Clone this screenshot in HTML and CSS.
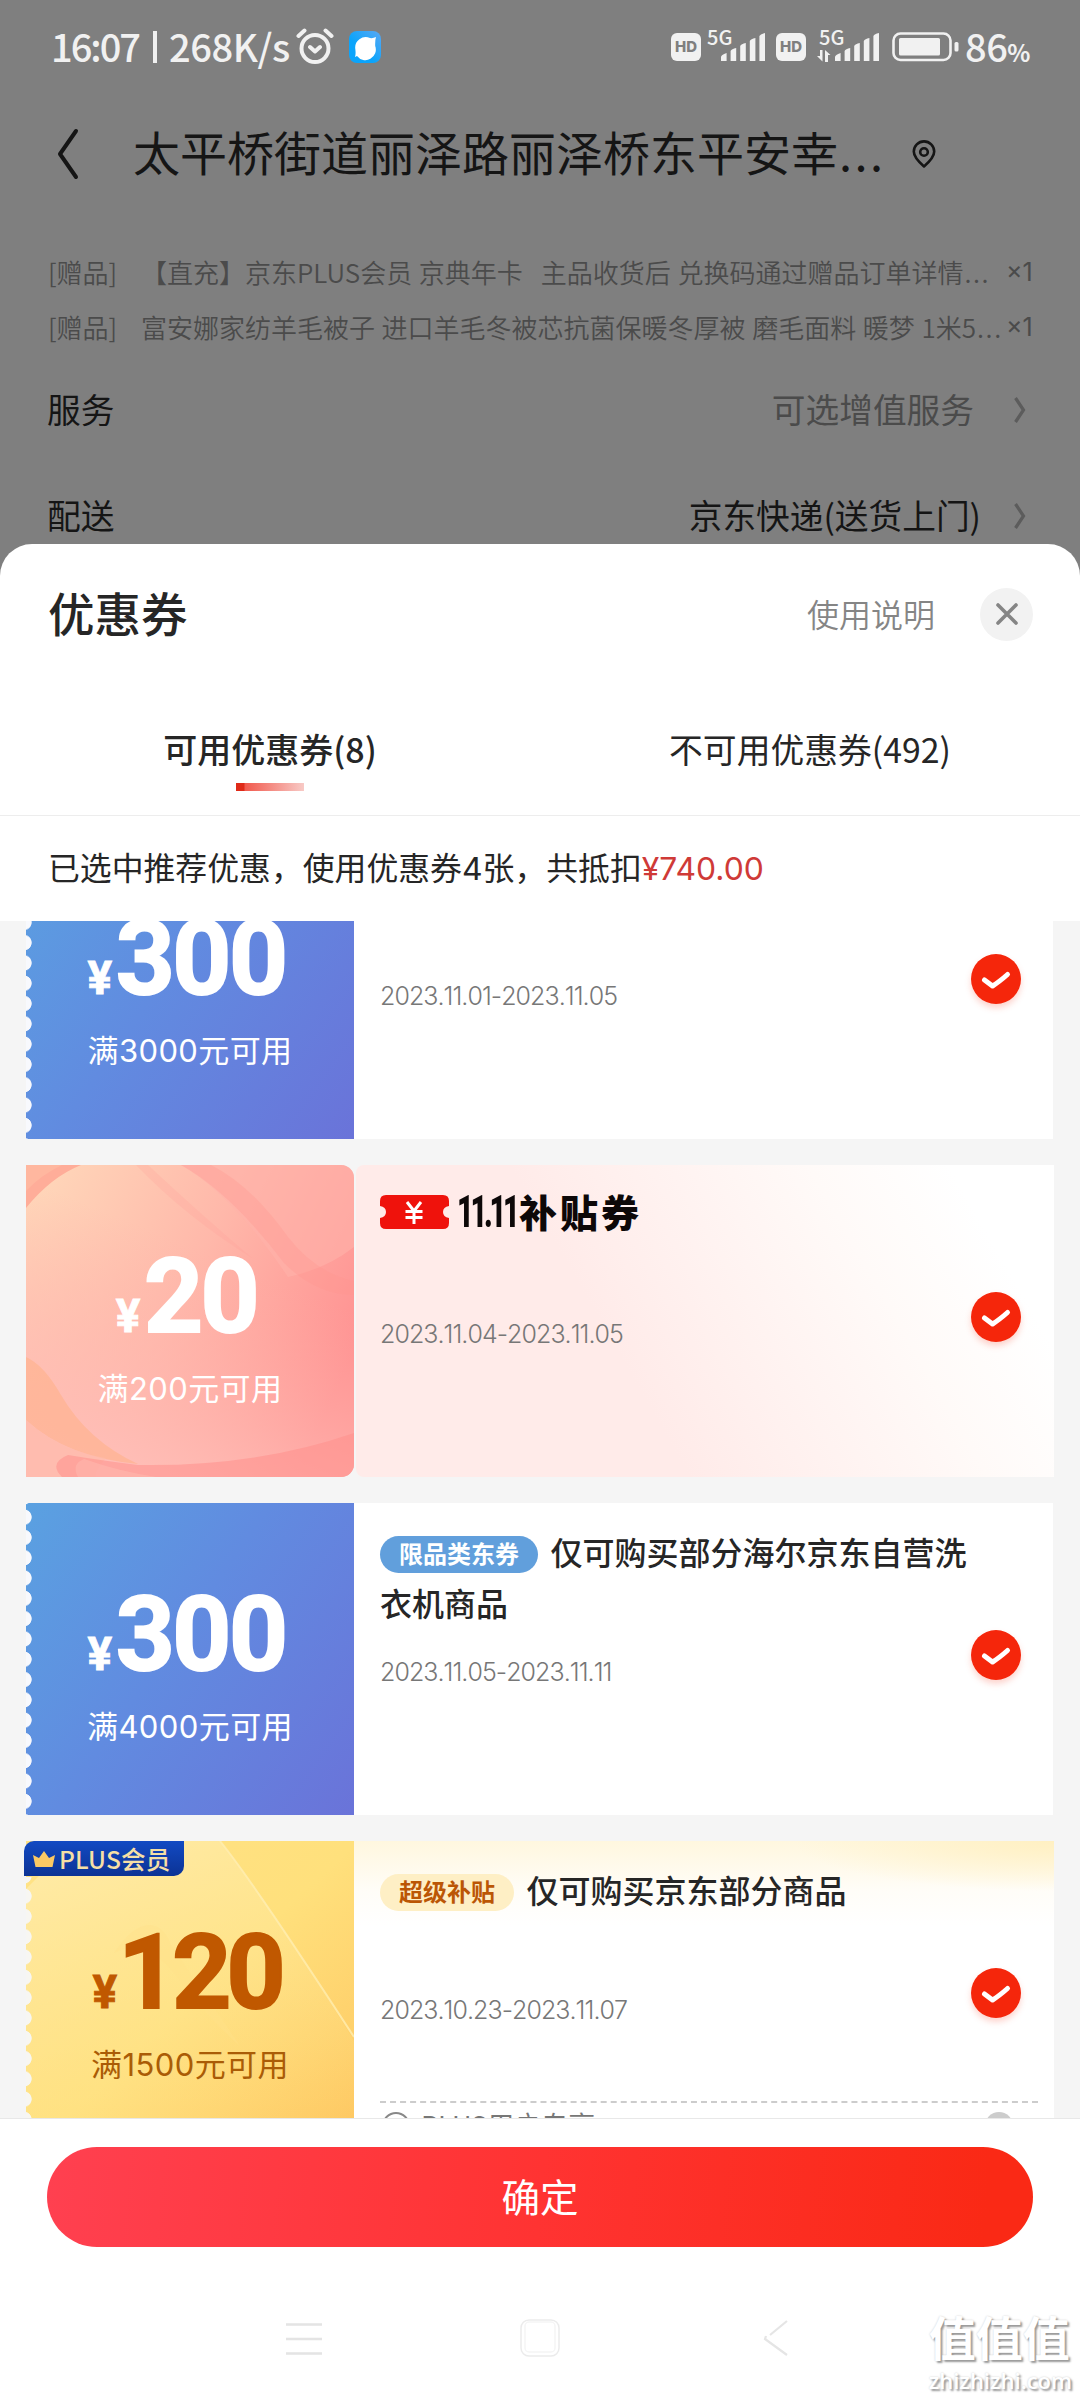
FILE: index.html
```html
<!DOCTYPE html>
<html lang="zh-CN">
<head>
<meta charset="utf-8">
<title>优惠券</title>
<link rel="stylesheet" href="styles.css">
</head>
<body>
<svg class="defs" width="0" height="0" aria-hidden="true">
  <symbol id="check" viewBox="0 0 70 70">
    <circle cx="35" cy="33" r="25" fill="#f5260b"/>
    <path d="M23.500 34 L31.500 40 Q38 36 46.500 28.500" fill="none" stroke="#fff" stroke-width="5" stroke-linecap="round" stroke-linejoin="round"/>
  </symbol>
  <symbol id="bars" viewBox="0 0 46 30">
    <path d="M0 29v-4q0-2 5.6-4v8zM9.6 29V19q1-2 5.6-3v13zM19.2 29V14q1-2 5.6-3v18zM28.8 29V9q1-2 5.6-3v23zM38.4 29V4q1-2 5.6-3v28z" fill="#f1f1f1"/>
  </symbol>
  <symbol id="chev" viewBox="0 0 14 28">
    <path d="M2.500 2 L10.500 14 L2.500 26" fill="none" stroke="#5c5c5c" stroke-width="3.200"/>
  </symbol>
</svg>

<div class="page">
  <div class="backdrop">
    <div class="status">
      <span class="clock">16:07</span><span class="sep"></span><span class="speed">268K/s</span>
      <svg class="alarm" width="40" height="38" viewBox="0 0 40 38" fill="none" stroke="#f1f1f1" stroke-width="4" stroke-linecap="round" stroke-linejoin="round">
        <circle cx="20" cy="20.5" r="13.5"/><path d="M15 19l5 4.5 5-4.5M3.500 8l6-5.500M36.500 8l-6-5.500"/>
      </svg>
      <svg class="app" width="32" height="32" viewBox="0 0 32 32">
        <defs><linearGradient id="ap" x1="1" y1="0" x2="0" y2="1"><stop offset="0" stop-color="#5aa8f4"/><stop offset=".6" stop-color="#0ba4fb"/></linearGradient></defs>
        <rect width="32" height="32" rx="8" fill="url(#ap)"/>
        <path d="M27 6q-1 3-.8 9A10.500 10.500 0 0 1 8 25l-2 1q1-3 .3-8A10.500 10.500 0 0 1 21 7q3 .5 6-1z" fill="#fff"/>
      </svg>
      <div class="status-right">
        <span class="hd">HD</span>
        <span class="net"><b>5G</b><svg class="sig" width="46" height="30"><use href="#bars"/></svg></span>
        <span class="hd hd2">HD</span>
        <span class="net net2"><b>5G</b><svg class="arrows" width="14" height="12" viewBox="0 0 14 12"><path d="M5.500 0v11.500L0 6h3V0zM8 12V0l5.500 5H11v7z" fill="#f1f1f1"/></svg><svg class="sig" width="46" height="30"><use href="#bars"/></svg></span>
        <svg class="battery" width="67" height="30" viewBox="0 0 67 30"><rect x="1.500" y="1.500" width="57" height="26.500" rx="7" fill="none" stroke="#f1f1f1" stroke-width="2.600"/><rect x="7" y="6" width="41" height="17.500" rx="1.500" fill="#f1f1f1"/><rect x="62.500" y="10" width="4" height="9.500" rx="1.500" fill="#f1f1f1"/></svg>
        <span class="pct">86<small>%</small></span>
      </div>
    </div>
    <div class="titlebar">
      <svg class="back" width="24" height="54" viewBox="0 0 24 54"><path d="M20 4 L4 27 L20 50" fill="none" stroke="#151515" stroke-width="4" stroke-linecap="round" stroke-linejoin="round"/></svg>
      <span class="addr">太平桥街道丽泽路丽泽桥东平安幸<i>...</i></span>
      <svg class="pin" width="26" height="30" viewBox="0 0 26 30" fill="none" stroke="#151515" stroke-width="2.600" stroke-linejoin="round"><path d="M13 27.500 C6 21.500 2.800 17.500 2.800 12.600 A10.200 10.200 0 0 1 23.200 12.600 C23.200 17.500 20 21.500 13 27.500z"/><circle cx="13" cy="13" r="3.800"/></svg>
    </div>
    <div class="gifts">
      <div class="gift"><span class="gl">[赠品]</span><span class="gn">【直充】京东<em>PLUS</em>会员 京典年卡<i class="gap"></i>主品收货后 兑换码通过赠品订单详情<i class="dots">...</i></span><span class="gc">×1</span></div>
      <div class="gift"><span class="gl">[赠品]</span><span class="gn">富安娜家纺羊毛被子 进口羊毛冬被芯抗菌保暖冬厚被 磨毛面料 暖梦 1米5<i class="dots">...</i></span><span class="gc">×1</span></div>
    </div>
    <div class="row"><span>服务</span><span class="rv muted">可选增值服务</span><svg width="14" height="28"><use href="#chev"/></svg></div>
    <div class="row"><span>配送</span><span class="rv near">京东快递(送货上门)</span><svg width="14" height="28"><use href="#chev"/></svg></div>
  </div>

  <div class="sheet">
    <div class="sheet-head">
      <h1>优惠券</h1>
      <span class="help">使用说明</span>
      <span class="close"><svg width="22" height="22" viewBox="0 0 22 22"><path d="M2 2L20 20M20 2L2 20" stroke="#858585" stroke-width="3.600" stroke-linecap="round"/></svg></span>
    </div>
    <div class="tabs">
      <div class="tab on"><span class="tab-t">可用优惠券(8)</span></div>
      <div class="tab"><span class="tab-t">不可用优惠券(492)</span></div>
    </div>
    <div class="info"><span>已选中推荐优惠，使用优惠券4张，共抵扣</span><span class="sum">¥740.00</span></div>

    <div class="list">
      <div class="card blue first">
        <div class="left"><div class="amt"><small>¥</small>300</div><div class="cond">满3000元可用</div></div>
        <div class="right"><div class="date">2023.11.01-2023.11.05</div><svg class="chk" width="70" height="70"><use href="#check"/></svg></div>
      </div>

      <div class="card pink">
        <div class="left">
          <svg class="art" width="328" height="312" viewBox="0 0 328 312">
            <defs>
              <linearGradient id="pk" x1="0" y1=".15" x2="1" y2=".6"><stop offset="0" stop-color="#ffd6b9"/><stop offset=".5" stop-color="#ffb8aa"/><stop offset="1" stop-color="#ff9292"/></linearGradient>
              <linearGradient id="pl" x1=".3" y1="1" x2=".6" y2=".3"><stop offset="0" stop-color="#ffbfb8"/><stop offset="1" stop-color="#ffb0a8" stop-opacity="0"/></linearGradient>
            </defs>
            <rect width="328" height="312" fill="url(#pk)"/>
            <rect width="328" height="312" fill="url(#pl)"/>
            <path d="M155 0H328V82Q300 104 262 112Q205 28 155 0z" fill="#ffb2aa" opacity=".6"/>
            <path d="M155 0H185Q225 20 262 72Q290 108 328 116V130Q290 130 258 98Q205 28 155 0z" fill="#ff958e" opacity=".3"/>
            <path d="M110 0H122Q170 45 226 93Q160 52 110 0z" fill="#ff9b94" opacity=".2"/>
            <path d="M0 0H55Q25 12 0 43z" fill="#ffad99"/>
            <path d="M0 0H36Q15 10 0 26z" fill="#ffb79f"/>
            <path d="M0 192Q18 200 35 230Q62 276 112 299Q40 292 0 255z" fill="#ffb28e" opacity=".65"/>
            <path d="M0 255Q32 285 80 293Q64 312 72 312H0z" fill="#ffbaa9" opacity=".6"/>
            <path d="M328 268Q230 302 112 300Q72 295 42 290Q22 298 36 312H328z" fill="#ff8f8c" opacity=".55"/>
            <path d="M58 294Q45 299 52 312H130Q92 306 58 294z" fill="#ffb8ae" opacity=".6"/>
          </svg>
          <div class="amt"><small>¥</small>20</div><div class="cond">满200元可用</div>
        </div>
        <div class="right">
          <div class="brand">
            <svg width="69" height="34" viewBox="0 0 69 34"><path d="M6 0H63Q69 0 69 6V11Q63 12 63 17T69 23V28Q69 34 63 34H6Q0 34 0 28V23Q6 22 6 17T0 11V6Q0 0 6 0z" fill="#ef120c"/><path d="M27 7l7 9 7-9M25.500 16.500h17M25.500 22.500h17M34 16v13" fill="none" stroke="#fff" stroke-width="3"/></svg>
            <span class="e11">11.11</span><span class="bt">补贴券</span>
          </div>
          <div class="date">2023.11.04-2023.11.05</div><svg class="chk" width="70" height="70"><use href="#check"/></svg>
        </div>
      </div>

      <div class="card blue">
        <div class="left"><div class="amt"><small>¥</small>300</div><div class="cond">满4000元可用</div></div>
        <div class="right"><div class="name"><span class="tag">限品类东券</span>仅可购买部分海尔京东自营洗衣机商品</div><div class="date">2023.11.05-2023.11.11</div><svg class="chk" width="70" height="70"><use href="#check"/></svg></div>
      </div>

      <div class="card gold">
        <div class="left">
          <svg class="art" width="328" height="312" viewBox="0 0 328 312">
            <defs>
              <linearGradient id="gd" x1=".1" y1=".1" x2="1" y2="1"><stop offset="0" stop-color="#ffe285"/><stop offset=".45" stop-color="#ffe07c"/><stop offset="1" stop-color="#fec660"/></linearGradient>
              <linearGradient id="gl" x1=".3" y1="0" x2=".7" y2="1"><stop offset="0" stop-color="#ffecab"/><stop offset="1" stop-color="#ffe38a" stop-opacity="0"/></linearGradient>
            </defs>
            <rect width="328" height="312" fill="url(#gd)"/>
            <path d="M0 48L28 20V0H194Q240 56 328 200V312H0z" fill="url(#gl)" opacity=".8"/>
            <path d="M194 0Q230 45 328 196" fill="none" stroke="#ffeeb0" stroke-width="2" opacity=".8"/>
            <path d="M88 112Q105 86 122 84Q138 84 145 104L214 205Q180 175 150 135Q120 95 88 112z" fill="#ffe28a" opacity=".4"/>
          </svg>
          <div class="plus"><svg width="22" height="16" viewBox="0 0 22 16"><path d="M0 4l6 3 5-7 5 7 6-3-2.500 12H2.500z" fill="#fbc964"/></svg><span>PLUS会员</span></div>
          <div class="amt"><small>¥</small>120</div><div class="cond">满1500元可用</div>
        </div>
        <div class="right"><div class="name"><span class="tag">超级补贴</span>仅可购买京东部分商品</div><div class="date">2023.10.23-2023.11.07</div><svg class="chk" width="70" height="70"><use href="#check"/></svg>
          <div class="extra"><span class="ring"></span><span>PLUS用户专享</span><span class="dot"></span></div>
        </div>
      </div>
    </div>

    <div class="foot"><button class="ok">确定</button></div>
    <div class="nav">
      <svg width="40" height="44" viewBox="0 0 40 44"><path d="M2 8.500h36M2 23h36M2 37.500h36" stroke="#e4e4e4" stroke-width="2.600"/></svg>
      <svg width="44" height="44" viewBox="0 0 44 44"><rect x="3" y="4" width="38" height="36" rx="8" fill="none" stroke="#ebebeb" stroke-width="1.500"/><rect x="7" y="6" width="30" height="30" rx="4" fill="none" stroke="#f5f5f5" stroke-width="1.500"/></svg>
      <svg width="30" height="44" viewBox="0 0 30 44"><path d="M26 5L9 19M26 39L4 23L5 20" fill="none" stroke="#e5e5e5" stroke-width="2.200"/></svg>
      <div class="mark"><b>值值值</b><span>zhizhizhi.com</span></div>
    </div>
  </div>
</div>
</body>
</html>
```
FILE: styles.css
```css
* { box-sizing: border-box; }
body { margin: 0; font-family: Inter, "Noto Sans CJK SC", sans-serif; color: #262626; }
.defs { position: absolute; }
.page { width: 1080px; height: 2400px; background: #7f7f7f; overflow: hidden; }
svg { display: block; flex: none; }
span { white-space: nowrap; }

.backdrop { height: 544px; overflow: hidden; color: #151515; }
.status { height: 94px; display: flex; align-items: center; padding: 0 51px; color: #f1f1f1; font-size: 38px; font-weight: 500; font-family: "Noto Sans CJK SC", sans-serif; }
.clock { width: 102px; letter-spacing: -2px; margin-bottom: 4px; }
.sep { width: 4px; height: 32px; background: #f1f1f1; margin-right: 12px; }
.speed { width: 126px; letter-spacing: -0.4px; margin-bottom: 4px; }
.alarm { margin-right: 14px; }
.status-right { margin-left: auto; display: flex; align-items: center; }
.hd { width: 30px; height: 28px; border-radius: 6px; background: #f1f1f1; color: #7f7f7f; font: 800 15px/28px Inter, sans-serif; text-align: center; }
.net { position: relative; width: 58px; height: 30px; margin: 0 11px 0 6px; }
.net b { position: absolute; left: 0; top: -7px; font: 500 20px/24px "Noto Sans CJK SC", sans-serif; }
.sig { position: absolute; right: 0; top: 0; }
.net .sig { left: 14px; }
.net2 { width: 65px; margin: 0 8px 0 13px; }
.net2 .sig { left: 16px; }
.arrows { position: absolute; left: -2px; top: 18px; }
.battery { margin-right: 6px; }
.pct { width: 64px; margin-bottom: 4px; letter-spacing: -0.5px; }
.pct small { font-size: 24px; font-weight: 700; letter-spacing: -2px; }

.titlebar { height: 120px; display: flex; align-items: center; padding-left: 56px; }
.back { margin-right: 54px; }
.addr { font: 400 47px/60px "Noto Sans CJK SC", sans-serif; width: 777px; margin-bottom: 6px; margin-left: -1px; margin-right: 1px; }
.addr i { font-style: normal; letter-spacing: 2.400px; margin-left: 1px; }

.gifts { margin-top: 30px; margin-bottom: 1px; font-size: 26px; color: #4b4b4b; }
.gift { height: 55px; display: flex; align-items: center; padding: 0 46px 0 48px; font-family: "Noto Sans CJK SC", sans-serif; font-weight: 350; }
.gl { width: 93px; }
.gn { width: 865px; word-spacing: 0.8px; }
.gn em { font-style: normal; letter-spacing: 0; }
.dots { font-style: normal; letter-spacing: 1.600px; margin-left: 1px; }
.gap { display: inline-block; width: 18px; }
.gc { font-family: Inter, sans-serif; font-weight: 400; font-size: 25px; }
.gift + .gift { margin-bottom: 3px; }

.row { height: 106px; display: flex; align-items: center; padding: 0 53px 0 47px; font: 400 33.700px/50px "Noto Sans CJK SC", sans-serif; }
.row span { margin-bottom: 2px; }
.rv { margin-left: auto; margin-right: 39px; }
.rv.near { margin-right: 32px; }
.muted { color: #4b4b4b; }

.sheet { height: 1856px; background: #fff; border-radius: 32px 32px 0 0; display: flex; flex-direction: column; overflow: hidden; }
.sheet-head { height: 142px; display: flex; align-items: center; padding: 0 47px 0 48px; }
h1 { margin: 0 0 6px; font: 500 46.500px/60px "Noto Sans CJK SC", sans-serif; }
.help { margin-left: auto; margin-right: 45px; margin-bottom: 4px; font: 350 32px/44px "Noto Sans CJK SC", sans-serif; color: #858585; }
.close { width: 53px; height: 53px; border-radius: 50%; background: #f2f2f2; display: grid; place-items: center; margin-bottom: 2px; }
.tabs { height: 130px; border-bottom: 1px solid #ededed; display: grid; grid-template-columns: 1fr 1fr; }
.tab { position: relative; text-align: center; font: 400 34px/125px "Noto Sans CJK SC", sans-serif; }
.tab.on { font-weight: 500; }
.tab:last-child { font-size: 33.800px; }
.tab.on::after { content: ""; position: absolute; left: 236px; top: 97px; width: 68px; height: 8px; background: linear-gradient(90deg, #df2a18 0 12%, #f1594d 13%, #f8cac6); }
.info { height: 105px; display: flex; align-items: center; padding-left: 48px; font: 400 31.850px/46px Inter, "Noto Sans CJK SC", sans-serif; }
.sum { color: #cf3a37; }

.list { height: 1197px; background: #f5f5f5; padding: 0 26px; overflow: hidden; }
.card { height: 312px; width: 1027px; display: grid; grid-template-columns: 328px 1fr; margin-bottom: 26px; }
.first { margin-top: -94px; }
.left { position: relative; color: #fff; text-align: center; padding-top: 80px; }
.right { position: relative; background: #fff; padding-left: 26px; }
.amt { position: relative; height: 104px; font: 700 103px/104px Roboto, sans-serif; letter-spacing: -2.500px; padding-right: 7px; -webkit-text-stroke: 2px currentColor; }
.amt small { font-size: 46px; margin-right: 6px; -webkit-text-stroke: 0.800px currentColor; }
.cond { position: relative; margin-top: 20px; font: 400 31px/40px Inter, "Noto Sans CJK SC", sans-serif; letter-spacing: 0.400px; }
.blue .left { background: radial-gradient(circle at -2px 10.150px, #f8f9fd 7.300px, transparent 8px) 0 4px / 20px 20.300px repeat-y, linear-gradient(125deg, #5aa1e1, #618be0 45%, #6a73d9); }
.date { position: absolute; left: 26px; top: 153px; font: 300 25px/32px Inter, sans-serif; color: #777; letter-spacing: -0.950px; font-kerning: none; }
.chk { position: absolute; left: 607px; top: 119px; filter: drop-shadow(0 4px 3px rgba(245, 38, 11, .2)); }
.name { padding-top: 23px; width: 600px; font: 500 32px/50.500px "Noto Sans CJK SC", sans-serif; white-space: normal; word-break: break-all; }
.tag { display: inline-block; height: 37px; line-height: 34px; border-radius: 19px; padding: 0 18.500px 0 19px; margin-right: 13px; font-size: 24px; font-weight: 700; background: #619fdc; color: #fff; vertical-align: 2px; }
.art { position: absolute; inset: 0; }

.pink { width: 1028px; }
.pink .left { border-radius: 0 13px 13px 0; overflow: hidden; }
.pink .right { margin-left: 2px; padding-left: 24px; border-radius: 8px 0 0 8px; background: linear-gradient(60deg, #ffebe9 38%, #fffaf8 72%, #fff 88%); }
.pink .date { left: 24px; }
.pink .chk { left: 605px; }
.brand { display: flex; align-items: center; height: 34px; margin-top: 30px; color: #0d0808; font: 900 38px/34px "Noto Sans CJK SC", sans-serif; }
.e11 { margin-left: 8px; width: 60px; font: 900 45px/34px Roboto, sans-serif; letter-spacing: -5px; transform: scaleX(.64); transform-origin: 0 50%; }
.bt { letter-spacing: 3px; margin: 0 0 3px 2px; }

.gold { width: 1028px; }
.gold .left { color: #c05800; }
.gold .amt { letter-spacing: -5px; }
.gold .left::after { content: ""; position: absolute; left: 0; top: 36px; bottom: 0; width: 6px; background: radial-gradient(circle at -2px 10.150px, #f7f6f2 7.300px, transparent 8px) 0 9px / 20px 20.300px repeat-y; }
.gold .cond { color: #aa5c06; }
.gold .right { background: radial-gradient(ellipse 260px 50px at 100% 0, #fff0c2, transparent), linear-gradient(#fff7df, #fffdf8 50px, #fff 85px); }
.gold .tag { background: #feefc5; color: #bb5605; }
.plus { position: absolute; z-index: 1; left: -2px; top: 0; width: 160px; height: 35px; border-radius: 10px 0 10px 0; background: linear-gradient(#124ac3, #0c3395); color: #f6dfa5; display: flex; align-items: center; padding-left: 9px; font: 500 24.500px/33px "Noto Sans CJK SC", sans-serif; }
.plus span { margin-left: 4px; letter-spacing: 0.200px; }
.extra { position: absolute; left: 26px; right: 16px; top: 260px; height: 52px; display: flex; align-items: center; padding-left: 2px; border-top: 2px dashed #ccc; font: 400 27px/50px "Noto Sans CJK SC", sans-serif; color: #777; }
.ring { width: 28px; height: 28px; border: 2px solid #888; border-radius: 50%; margin: 0 11px 4px 0; }
.extra span:nth-child(2) { line-height: 40px; margin-bottom: 7px; }
.dot { margin-left: auto; margin-right: 25px; margin-bottom: 4px; width: 28px; height: 28px; border-radius: 50%; background: #ccc; }

.foot { border-top: 1px solid #e8e8e8; padding: 28px 47px 0; height: 129px; }
.ok { display: block; width: 986px; height: 100px; border: 0; border-radius: 50px; background: linear-gradient(95deg, #ff4050, #ff3332 50%, #fa2915 95%); color: #fff; font: 400 38.500px/96px "Noto Sans CJK SC", sans-serif; padding: 0 0 4px; }
.nav { height: 153px; display: grid; grid-template-columns: 324px 238px 229px 1fr; padding-top: 69px; }
.nav svg { justify-self: end; }
.mark { justify-self: end; margin: -6px 8px 0 0; display: flex; flex-direction: column; color: #fff; text-shadow: 2px 2px 2px #999, 0 0 2px #ccc; }
.mark b { font: 700 47px/52px "Noto Sans CJK SC", sans-serif; }
.mark span { font: 600 22px/36px "Open Sans", sans-serif; }
```
